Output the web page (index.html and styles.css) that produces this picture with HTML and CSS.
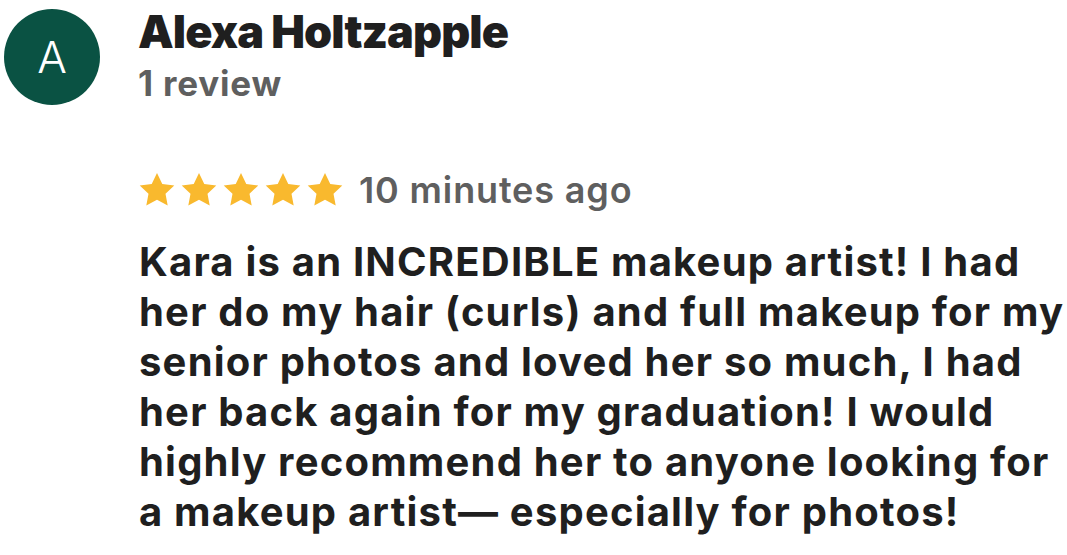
FILE: index.html
```html
<!DOCTYPE html>
<html>
<head>
<meta charset="utf-8">
<link rel="stylesheet" href="styles.css">
</head>
<body>
<div class="review">
  <div class="header">
    <div class="avatar">A</div>
    <div class="who">
      <div class="name">Alexa Holtzapple</div>
      <div class="count">1 review</div>
    </div>
  </div>
  <div class="content">
    <div class="meta">
      <div class="stars">
        <svg viewBox="0 0 20 19" class="star"><path d="M10 0l2.95 6.1 6.7.86-4.9 4.63 1.23 6.61L10 14.96 4.02 18.2l1.23-6.61L.35 6.96l6.7-.86z"/></svg>
        <svg viewBox="0 0 20 19" class="star"><path d="M10 0l2.95 6.1 6.7.86-4.9 4.63 1.23 6.61L10 14.96 4.02 18.2l1.23-6.61L.35 6.96l6.7-.86z"/></svg>
        <svg viewBox="0 0 20 19" class="star"><path d="M10 0l2.95 6.1 6.7.86-4.9 4.63 1.23 6.61L10 14.96 4.02 18.2l1.23-6.61L.35 6.96l6.7-.86z"/></svg>
        <svg viewBox="0 0 20 19" class="star"><path d="M10 0l2.95 6.1 6.7.86-4.9 4.63 1.23 6.61L10 14.96 4.02 18.2l1.23-6.61L.35 6.96l6.7-.86z"/></svg>
        <svg viewBox="0 0 20 19" class="star"><path d="M10 0l2.95 6.1 6.7.86-4.9 4.63 1.23 6.61L10 14.96 4.02 18.2l1.23-6.61L.35 6.96l6.7-.86z"/></svg>
      </div>
      <span class="time">10 minutes ago</span>
    </div>
    <p class="text">Kara is an INCREDIBLE makeup artist! I had<br>her do my hair (curls) and full makeup for my<br>senior photos and loved her so much, I had<br>her back again for my graduation! I would<br>highly recommend her to anyone looking for<br>a makeup artist— especially for photos!</p>
  </div>
</div>
</body>
</html>
```

FILE: styles.css
```css
html, body {
  margin: 0;
  padding: 0;
  background: #ffffff;
}
body {
  font-family: Inter, "Liberation Sans", sans-serif;
  color: #1f1f1f;
}
.review {
  padding: 9px 0 0 4px;
}
.header {
  display: flex;
  gap: 38px;
  align-items: flex-start;
}
.avatar {
  width: 96px;
  height: 96px;
  border-radius: 50%;
  background: #0a5243;
  color: #ffffff;
  font-size: 44px;
  font-weight: 300;
  display: flex;
  align-items: center;
  justify-content: center;
  line-height: 1;
}
.who {
  margin-top: -2px;
}
.name {
  font-size: 45px;
  font-weight: 900;
  line-height: 50px;
  letter-spacing: -0.9px;
}
.count {
  margin-top: 6px;
  font-size: 35px;
  font-weight: 700;
  line-height: 40px;
  letter-spacing: 0.8px;
  color: #5f5f5f;
}
.content {
  padding-left: 135px;
  margin-top: 63px;
}
.meta {
  display: flex;
  align-items: center;
  gap: 16px;
  height: 44px;
}
.stars {
  display: flex;
  gap: 6px;
}
.star {
  width: 36px;
  height: 34px;
  fill: #f9b92e;
  display: block;
}
.time {
  font-size: 36px;
  font-weight: 600;
  color: #5f5f5f;
  line-height: 44px;
  letter-spacing: 0.85px;
}
.text {
  margin: 25px 0 0 0;
  font-size: 40px;
  font-weight: 700;
  line-height: 50px;
  letter-spacing: 1.2px;
  white-space: nowrap;
  color: #1f1f1f;
}
```
